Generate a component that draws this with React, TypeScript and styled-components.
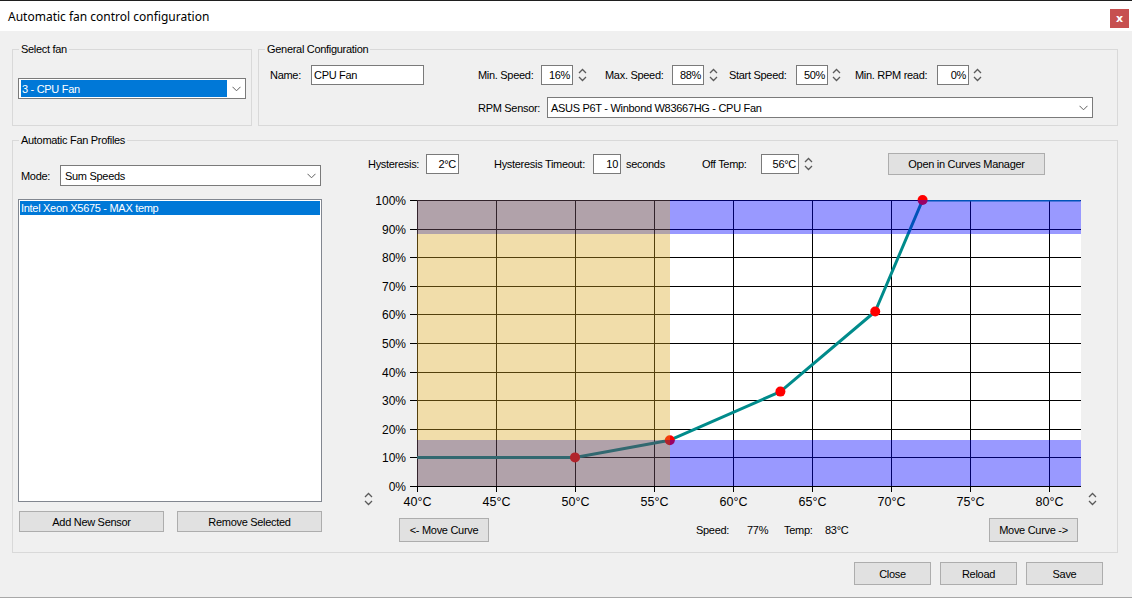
import React from "react";
import styled, { createGlobalStyle } from "styled-components";

const GlobalStyle = createGlobalStyle`
  html, body { margin: 0; padding: 0; background: #f0f0f0; }
  body {
    font-family: "Liberation Sans", Arial, sans-serif;
    font-size: 11px;
    letter-spacing: -0.3px;
    color: #000;
  }
  * { box-sizing: border-box; }
`;

const Window = styled.div`
  width: 1132px;
  height: 598px;
  background: #f0f0f0;
  display: flex;
  flex-direction: column;
  border-bottom: 1px solid #a8a8a8;
  overflow: hidden;
`;

const TitleBar = styled.div`
  flex: none;
  height: 31px;
  background: #fff;
  border-top: 1px solid #1f1f1f;
  display: flex;
  align-items: center;
  justify-content: space-between;
  padding: 0 3px 0 8px;
`;

const Title = styled.span`
  font-family: "Noto Sans", "Open Sans", sans-serif;
  font-size: 12px;
  letter-spacing: 0;
`;

const CloseBtn = styled.div`
  width: 19px;
  height: 19px;
  margin-top: 4px;
  background: #c75050;
  color: #fff;
  font-family: "DejaVu Sans", sans-serif;
  font-weight: bold;
  font-size: 11px;
  letter-spacing: 0;
  display: flex;
  align-items: center;
  justify-content: center;
  line-height: 1;
`;

const Body = styled.div`
  display: flex;
  flex-direction: column;
  padding: 12px 14px 0 12px;
`;

const TopRow = styled.div`
  display: flex;
  gap: 6px;
  height: 83px;
`;

const GroupBox = styled.fieldset<{ $w?: number; $mt?: number }>`
  margin: ${(p) => p.$mt ?? 0}px 0 0 0;
  padding: 0;
  border: 1px solid #d9d9d9;
  min-width: 0;
  ${(p) => (p.$w ? `width: ${p.$w}px; flex: none;` : "flex: 1;")}
`;

const Legend = styled.legend`
  margin-left: 6px;
  padding: 0 2px;
  height: 13px;
  line-height: 13px;
  font-size: 11px;
`;

const Stack = styled.div<{ $pt?: number; $pl?: number }>`
  display: flex;
  flex-direction: column;
  padding-top: ${(p) => p.$pt ?? 0}px;
  padding-left: ${(p) => p.$pl ?? 0}px;
`;

const Row = styled.div<{ $pl?: number; $mt?: number; $h?: number }>`
  display: flex;
  align-items: center;
  flex: none;
  padding-left: ${(p) => p.$pl ?? 0}px;
  margin-top: ${(p) => p.$mt ?? 0}px;
  height: ${(p) => p.$h ?? 20}px;
`;

const Label = styled.span<{ $w?: number; $ml?: number; $pl?: number }>`
  flex: none;
  white-space: nowrap;
  ${(p) => (p.$w ? `width: ${p.$w}px;` : "")}
  margin-left: ${(p) => p.$ml ?? 0}px;
  padding-left: ${(p) => p.$pl ?? 0}px;
`;

const TextBox = styled.div<{ $w: number; $right?: boolean; $ml?: number }>`
  flex: none;
  width: ${(p) => p.$w}px;
  height: 20px;
  margin-left: ${(p) => p.$ml ?? 0}px;
  background: #fff;
  border: 1px solid #7a7a7a;
  display: flex;
  align-items: center;
  justify-content: ${(p) => (p.$right ? "flex-end" : "flex-start")};
  padding: 0 2px 0 2px;
  white-space: nowrap;
`;

const Combo = styled.div<{ $w: number; $ml?: number; $pl?: number }>`
  flex: none;
  width: ${(p) => p.$w}px;
  height: 21px;
  margin-left: ${(p) => p.$ml ?? 0}px;
  background: #fff;
  border: 1px solid #7a7a7a;
  display: flex;
  align-items: center;
  padding-left: ${(p) => p.$pl ?? 3}px;
  white-space: nowrap;
`;

const ComboSelection = styled.span`
  width: 206px;
  height: 17px;
  background: #0078d7;
  color: #fff;
  display: flex;
  align-items: center;
  padding-left: 1px;
`;

const ArrowBox = styled.span`
  margin-left: auto;
  width: 17px;
  height: 100%;
  display: flex;
  align-items: center;
  justify-content: center;
  flex: none;
`;

const SpinBox = styled.span<{ $ml?: number }>`
  flex: none;
  width: 9px;
  height: 20px;
  margin-left: ${(p) => p.$ml ?? 0}px;
  display: flex;
  align-items: center;
`;

const Button = styled.div<{ $w: number; $h?: number; $ml?: number }>`
  flex: none;
  width: ${(p) => p.$w}px;
  height: ${(p) => p.$h ?? 23}px;
  margin-left: ${(p) => p.$ml ?? 0}px;
  background: #e1e1e1;
  border: 1px solid #adadad;
  display: flex;
  align-items: center;
  justify-content: center;
  white-space: nowrap;
`;

const ProfilesInner = styled.div`
  display: flex;
  padding-bottom: 10px;
`;

const LeftCol = styled.div`
  flex: none;
  width: 309px;
  padding-left: 5px;
  display: flex;
  flex-direction: column;
`;

const RightCol = styled.div`
  flex: none;
  width: 759px;
  margin-left: 36px;
  display: flex;
  flex-direction: column;
`;

const ListBox = styled.div`
  flex: none;
  width: 304px;
  height: 303px;
  margin-top: 13px;
  background: #fff;
  border: 1px solid #828790;
  padding: 1px;
`;

const ListItem = styled.div<{ $selected?: boolean }>`
  height: 14px;
  line-height: 14px;
  padding-left: 1px;
  background: ${(p) => (p.$selected ? "#0078d7" : "transparent")};
  color: ${(p) => (p.$selected ? "#fff" : "#000")};
`;

const ChartRow = styled.div`
  display: flex;
  align-items: flex-end;
  height: 326px;
  margin-top: 15px;
  flex: none;
`;

const ChartSpinSlot = styled.div<{ $w: number; $pl?: number }>`
  flex: none;
  width: ${(p) => p.$w}px;
  padding-left: ${(p) => p.$pl ?? 0}px;
  padding-bottom: 8px;
  display: flex;
`;

const ChartSvg = styled.svg`
  flex: none;
  display: block;
  font-family: "Liberation Sans", Arial, sans-serif;
  letter-spacing: 0;
`;

const Footer = styled.div`
  display: flex;
  justify-content: flex-end;
  gap: 9px;
  margin-top: 9px;
  padding-right: 15px;
`;

function Chevron() {
  return (
    <ArrowBox>
      <svg width="9" height="6" viewBox="0 0 9 6">
        <polyline points="0.5,0.8 4.5,4.8 8.5,0.8" fill="none" stroke="#606060" strokeWidth="1" />
      </svg>
    </ArrowBox>
  );
}

function SpinGlyph() {
  return (
    <svg width="9" height="18" viewBox="0 0 9 18">
      <polyline points="1,7 4.5,3.5 8,7" fill="none" stroke="#5a5a5a" strokeWidth="1.3" />
      <polyline points="1,11 4.5,14.5 8,11" fill="none" stroke="#5a5a5a" strokeWidth="1.3" />
    </svg>
  );
}

function Spinner({ ml }: { ml?: number }) {
  return (
    <SpinBox $ml={ml}>
      <SpinGlyph />
    </SpinBox>
  );
}

/* ---------- chart ---------- */
const CW = 712;
const CH = 326;
const PL = 41;
const PR = 705;
const PT = 10;
const PB = 296;
const tx = (t: number) => PL + (t - 40) * 15.8;
const py = (p: number) => PB - p * 2.86;

const curvePts: [number, number][] = [
  [40, 10],
  [50, 10],
  [56, 16],
  [63, 33],
  [69, 61],
  [72, 100],
  [82, 100],
].map(([t, p]) => [tx(t), py(p)] as [number, number]);

function linePath(pts: [number, number][]) {
  return pts.map(([x, y], i) => `${i === 0 ? "M" : "L"}${x.toFixed(1)},${y.toFixed(1)}`).join(" ");
}

function Chart() {
  const xb = Math.round(tx(56));
  const yTop = Math.round(py(88));
  const yBot = Math.round(py(16));
  const pct = [0, 10, 20, 30, 40, 50, 60, 70, 80, 90, 100];
  const temps = [40, 45, 50, 55, 60, 65, 70, 75, 80];
  return (
    <ChartSvg width={CW} height={CH} viewBox={`0 0 ${CW} ${CH}`}>
      <defs>
        <clipPath id="plotClip">
          <rect x={PL} y={PT} width={PR - PL} height={PB - PT + 2} />
        </clipPath>
      </defs>
      <rect x={PL} y={PT} width={PR - PL} height={PB - PT} fill="#fff" />
      {pct.map((p) => {
        const y = Math.round(py(p)) + 0.5;
        return (
          <g key={`h${p}`}>
            <line x1={PL - 7} y1={y} x2={PR} y2={y} stroke="#000" strokeWidth="1" />
            <text x={30} y={y + 4.5} fontSize="12" textAnchor="end" fill="#000">
              {p}%
            </text>
          </g>
        );
      })}
      {temps.map((t) => {
        const x = Math.round(tx(t)) + 0.5;
        return (
          <g key={`v${t}`}>
            <line x1={x} y1={PT} x2={x} y2={PB + 6} stroke="#000" strokeWidth="1" />
            <text x={x} y={316} fontSize="12.5" textAnchor="middle" fill="#000">
              {t}°C
            </text>
          </g>
        );
      })}
      <path
        d={linePath(curvePts)}
        fill="none"
        stroke="#008b8b"
        strokeWidth="3"
        strokeLinejoin="round"
        clipPath="url(#plotClip)"
      />
      {curvePts.slice(1, 6).map(([x, y], i) => (
        <circle key={i} cx={x} cy={y} r={5} fill="#ff0000" />
      ))}
      <rect x={PL} y={PT} width={xb - PL} height={yTop - PT} fill="rgb(100,70,85)" fillOpacity="0.5" />
      <rect x={PL} y={yBot} width={xb - PL} height={PB - yBot} fill="rgb(100,70,85)" fillOpacity="0.5" />
      <rect x={PL} y={yTop} width={xb - PL} height={yBot - yTop} fill="rgb(217,165,32)" fillOpacity="0.38" />
      <rect x={xb} y={PT} width={PR - xb} height={yTop - PT} fill="rgb(0,0,255)" fillOpacity="0.4" />
      <rect x={xb} y={yBot} width={PR - xb} height={PB - yBot} fill="rgb(0,0,255)" fillOpacity="0.4" />
    </ChartSvg>
  );
}

export default function App() {
  return (
    <>
      <GlobalStyle />
      <Window>
        <TitleBar>
          <Title>Automatic fan control configuration</Title>
          <CloseBtn>x</CloseBtn>
        </TitleBar>
        <Body>
          <TopRow>
            <GroupBox $w={240}>
              <Legend>Select fan</Legend>
              <Stack $pt={22} $pl={5}>
                <Combo $w={228} $pl={2}>
                  <ComboSelection>3 - CPU Fan</ComboSelection>
                  <Chevron />
                </Combo>
              </Stack>
            </GroupBox>
            <GroupBox>
              <Legend>General Configuration</Legend>
              <Stack $pt={9}>
                <Row $pl={11} $h={20}>
                  <Label $w={41}>Name:</Label>
                  <TextBox $w={113}>CPU Fan</TextBox>
                  <Label $w={63} $ml={54}>Min. Speed:</Label>
                  <TextBox $w={32} $right>16%</TextBox>
                  <Spinner ml={5} />
                  <Label $w={67} $ml={18}>Max. Speed:</Label>
                  <TextBox $w={32} $right>88%</TextBox>
                  <Spinner ml={5} />
                  <Label $w={67} $ml={11}>Start Speed:</Label>
                  <TextBox $w={32} $right>50%</TextBox>
                  <Spinner ml={4} />
                  <Label $w={82} $ml={14}>Min. RPM read:</Label>
                  <TextBox $w={32} $right>0%</TextBox>
                  <Spinner ml={4} />
                </Row>
                <Row $pl={219} $mt={12} $h={21}>
                  <Label $w={69}>RPM Sensor:</Label>
                  <Combo $w={546}>
                    ASUS P6T - Winbond W83667HG - CPU Fan
                    <Chevron />
                  </Combo>
                </Row>
              </Stack>
            </GroupBox>
          </TopRow>

          <GroupBox $mt={8}>
            <Legend>Automatic Fan Profiles</Legend>
            <ProfilesInner>
              <LeftCol>
                <Row $mt={18} $h={21}>
                  <Label $w={42} $pl={3}>Mode:</Label>
                  <Combo $w={261} $pl={4}>
                    Sum Speeds
                    <Chevron />
                  </Combo>
                </Row>
                <ListBox>
                  <ListItem $selected>Intel Xeon X5675 - MAX temp</ListItem>
                </ListBox>
                <Row $mt={9} $h={21}>
                  <Button $w={145} $h={21} $ml={1}>Add New Sensor</Button>
                  <Button $w={145} $h={21} $ml={13}>Remove Selected</Button>
                </Row>
              </LeftCol>
              <RightCol>
                <Row $mt={6} $h={22} $pl={10}>
                  <Label $w={58}>Hysteresis:</Label>
                  <TextBox $w={33} $right>2°C</TextBox>
                  <Label $w={99} $ml={35}>Hysteresis Timeout:</Label>
                  <TextBox $w={28} $right>10</TextBox>
                  <Label $w={76} $ml={5}>seconds</Label>
                  <Label $w={59}>Off Temp:</Label>
                  <TextBox $w={38} $right>56°C</TextBox>
                  <Spinner ml={5} />
                  <Button $w={157} $h={22} $ml={75}>Open in Curves Manager</Button>
                </Row>
                <ChartRow>
                  <ChartSpinSlot $w={18} $pl={6}>
                    <SpinGlyph />
                  </ChartSpinSlot>
                  <Chart />
                  <ChartSpinSlot $w={12}>
                    <SpinGlyph />
                  </ChartSpinSlot>
                </ChartRow>
                <Row $mt={2} $h={24} $pl={41}>
                  <Button $w={90} $h={24}>&lt;- Move Curve</Button>
                  <Label $w={51} $ml={207}>Speed:</Label>
                  <Label $w={37}>77%</Label>
                  <Label $w={41}>Temp:</Label>
                  <Label $w={164}>83°C</Label>
                  <Button $w={89} $h={24}>Move Curve -&gt;</Button>
                </Row>
              </RightCol>
            </ProfilesInner>
          </GroupBox>

          <Footer>
            <Button $w={77}>Close</Button>
            <Button $w={77}>Reload</Button>
            <Button $w={77}>Save</Button>
          </Footer>
        </Body>
      </Window>
    </>
  );
}
